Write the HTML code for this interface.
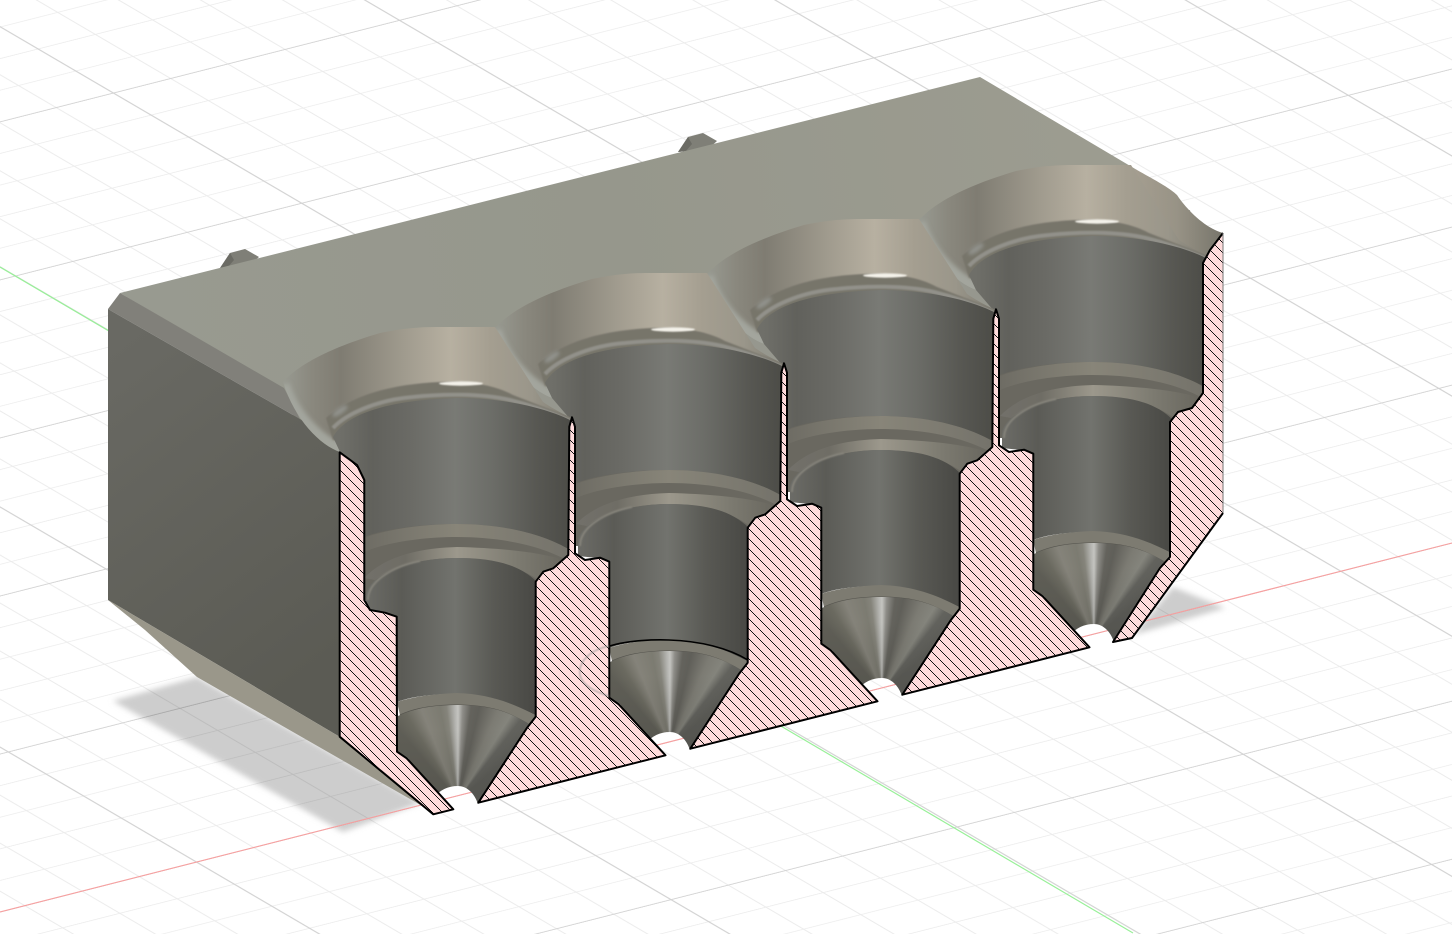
<!DOCTYPE html>
<html><head><meta charset="utf-8"><title>Section view</title>
<style>html,body{margin:0;padding:0;background:#fff;width:1452px;height:934px;overflow:hidden}svg{display:block}
.c{width:140px;height:110px;background:conic-gradient(from 300deg at 63px 100px,#5f5e56 20deg,#6b6a60 29deg,#85837a 38deg,#7c7b71 49deg,#85847b 53deg,#b4b4b0 58deg,#c4c4c0 60deg,#8e8d88 63deg,#64635d 68deg,#605f59 73deg,#7c7b73 84deg,#84847c 92deg,#62625d 98deg,#5c5c57 110deg)}</style>
</head><body>
<svg width="1452" height="934" viewBox="0 0 1452 934" xmlns="http://www.w3.org/2000/svg">
<defs>
<pattern id="grid" patternUnits="userSpaceOnUse" width="100" height="100" patternTransform="matrix(2.861,-0.727,1.883,1.102,721.4,713)">
<g stroke="#ececec" stroke-width="0.48" fill="none">
<path d="M30,0V100M50,0V100M70,0V100M90,0V100"/>
<path d="M0,30H100M0,50H100M0,70H100M0,90H100"/>
</g>
<g stroke="#d2d2d2" stroke-width="0.55" fill="none"><path d="M10,0V100M0,10H100"/></g>
</pattern>
<pattern id="hatch" patternUnits="userSpaceOnUse" width="10" height="10">
<rect width="10" height="10" fill="#ffdcdc"/>
<path fill="#111" shape-rendering="crispEdges" d="M0,0h1v1h-1zM1,1h1v1h-1zM2,2h1v1h-1zM3,3h1v1h-1zM4,4h1v1h-1zM5,5h1v1h-1zM6,6h1v1h-1zM7,7h1v1h-1zM8,8h1v1h-1zM9,9h1v1h-1z"/>
</pattern>
<pattern id="h2" href="#hatch" patternTransform="translate(-212,54)"/>
<pattern id="h3" href="#hatch" patternTransform="translate(-424,108)"/>
<filter id="b4" x="-20%" y="-20%" width="140%" height="140%"><feGaussianBlur stdDeviation="3"/></filter>
<filter id="b2" x="-30%" y="-30%" width="160%" height="160%"><feGaussianBlur stdDeviation="2"/></filter>
<filter id="b15" x="-60%" y="-60%" width="220%" height="220%"><feGaussianBlur stdDeviation="1.8"/></filter>
<filter id="b1" x="-30%" y="-30%" width="160%" height="160%"><feGaussianBlur stdDeviation="0.9"/></filter>
<linearGradient id="top" gradientUnits="userSpaceOnUse" x1="120" y1="300" x2="1100" y2="150">
<stop offset="0" stop-color="#989a90"/><stop offset=".5" stop-color="#96978c"/><stop offset="1" stop-color="#9c9c90"/></linearGradient>
<linearGradient id="left" gradientUnits="userSpaceOnUse" x1="108" y1="350" x2="340" y2="650">
<stop offset="0" stop-color="#696963"/><stop offset="1" stop-color="#5b5b54"/></linearGradient>
<linearGradient id="ext" gradientUnits="userSpaceOnUse" x1="1130" y1="0" x2="1223" y2="0">
<stop offset="0" stop-color="#a69f91"/><stop offset=".5" stop-color="#989386"/><stop offset="1" stop-color="#77756b"/></linearGradient>
<linearGradient id="fl" gradientUnits="userSpaceOnUse" x1="283" y1="0" x2="572" y2="0">
<stop offset="0" stop-color="#989a91"/><stop offset=".1" stop-color="#8a887e"/><stop offset=".2" stop-color="#7f7c72"/><stop offset=".42" stop-color="#a09b8e"/><stop offset=".58" stop-color="#b7b0a1"/><stop offset=".72" stop-color="#a49e90"/><stop offset=".86" stop-color="#9a968a"/><stop offset="1" stop-color="#7e7c72"/></linearGradient>
<linearGradient id="ub" gradientUnits="userSpaceOnUse" x1="340" y1="0" x2="570" y2="0">
<stop offset="0" stop-color="#6f6f69"/><stop offset=".14" stop-color="#61615c"/><stop offset=".3" stop-color="#6a6a65"/><stop offset=".5" stop-color="#797a75"/><stop offset=".66" stop-color="#6c6d68"/><stop offset=".85" stop-color="#585853"/><stop offset="1" stop-color="#4c4c47"/></linearGradient>
<linearGradient id="lb" gradientUnits="userSpaceOnUse" x1="368" y1="0" x2="536" y2="0">
<stop offset="0" stop-color="#6b6b66"/><stop offset=".2" stop-color="#5b5b56"/><stop offset=".52" stop-color="#72736e"/><stop offset=".75" stop-color="#595954"/><stop offset="1" stop-color="#484844"/></linearGradient>
<linearGradient id="gr" gradientUnits="userSpaceOnUse" x1="364" y1="0" x2="570" y2="0">
<stop offset="0" stop-color="#6e6c64"/><stop offset=".45" stop-color="#888579"/><stop offset="1" stop-color="#74726a"/></linearGradient>
<linearGradient id="gr2" gradientUnits="userSpaceOnUse" x1="364" y1="0" x2="570" y2="0">
<stop offset="0" stop-color="#72706a"/><stop offset=".2" stop-color="#6f6d65"/><stop offset=".45" stop-color="#9c988c"/><stop offset=".75" stop-color="#7c7a70"/><stop offset="1" stop-color="#66645c"/></linearGradient>
<linearGradient id="dk" gradientUnits="userSpaceOnUse" x1="0" y1="730" x2="0" y2="795">
<stop offset="0" stop-color="#3c3c38" stop-opacity="0"/><stop offset="1" stop-color="#3c3c38" stop-opacity=".22"/></linearGradient>
<clipPath id="flc"><path d="M283,382C297,367 323,350 380,333C400,329 415,327 437,327L495,327L543,402C555,410 565,415 572,418L572,440L340,452C320,445 295,420 283,382Z"/></clipPath>
<clipPath id="cc"><path d="M398,716C415,708 435,705 457,705C490,705 510,712 531,725L478,804C474,792 466,786 458,786C448,786 440,790 434,797L408,758L398,752Z"/></clipPath>
<g id="hole">
<path d="M283,382C297,367 323,350 380,333C400,329 415,327 437,327L495,327L543,402C555,410 565,415 572,418L572,440L340,452C320,445 295,420 283,382Z" fill="url(#fl)"/>
<g clip-path="url(#flc)">
<path d="M283,385C292,412 315,440 345,452" fill="none" stroke="#a3a59d" stroke-width="13" filter="url(#b2)"/>
<path d="M326,418C345,402 375,385 440,382C470,381 495,385 513,395L572,418L570,436L333,440Z" fill="#77746a" filter="url(#b1)"/>
<path d="M333,428C345,415 375,400 413,397C440,394 480,393 510,400C530,405 550,412 570,421" fill="none" stroke="#92918a" stroke-width="4" filter="url(#b1)"/>
<ellipse cx="340" cy="411" rx="9" ry="3" transform="rotate(-35 340 411)" fill="#92938d" filter="url(#b15)"/>
</g>
<ellipse cx="461" cy="383.5" rx="22" ry="2.2" fill="#f4f2ea" filter="url(#b1)"/>
<path d="M333,437C345,415 385,400 457,398C510,398 550,410 570,420L572,600L364,600L364,480L340,452Z" fill="url(#ub)"/>
<path d="M364,537C385,529 420,524 457,524C505,524 545,535 570,550L570,600L364,600Z" fill="#6a6860"/>
<path d="M364,538C385,530 420,524 457,524C505,524 545,535 570,550L570,562C545,547 505,537 457,537C420,537 385,543 364,552Z" fill="url(#gr)"/>
<path d="M364,578C385,556 420,548 457,547C500,548 540,552 564,560L545,585C520,565 490,558 457,558C425,558 395,565 375,580Z" fill="url(#gr2)"/>
<path d="M366,610L366,595C368,575 410,558 457,558C495,558 520,565 537,582L537,716C515,705 490,694 457,694C430,694 410,697 397,702L397,617L385,612Z" fill="url(#lb)"/>
<path d="M368,600C368,580 395,566 420,561" fill="none" stroke="#85837a" stroke-width="2" filter="url(#b1)"/>
<path d="M397,702C415,696 435,694 457,693C490,694 515,704 537,716L531,726C510,712 490,705 457,705C435,705 415,708 400,715Z" fill="#7d7b71"/>
<path d="M400,715C415,708 435,705 457,705C490,705 510,712 531,726" fill="none" stroke="#55544e" stroke-width="1"/>
</g>
</defs>

<rect width="1452" height="934" fill="#fff"/>
<rect width="1452" height="934" fill="url(#grid)"/>

<!-- floor shadows -->
<g style="mix-blend-mode:multiply">
<path d="M113,701L197,677L420,803L343,832Z" fill="#cdcdcd" filter="url(#b4)"/>
<path d="M1133,635L1173,587L1225,608Z" fill="#cdcdcd" filter="url(#b4)"/>
</g>
<path d="M0,912L1452,543" stroke="#f7a0a0" stroke-width="1.1"/>
<path d="M0,267L1133,933" stroke="#98f098" stroke-width="1.2"/>

<!-- pegs -->
<path d="M220,268L230,253L245,249L259,257L250,265Z" fill="#7f7f77"/><path d="M220,268L230,253L234,260L228,267Z" fill="#6b6b64"/>
<g transform="translate(458,-116)"><path d="M220,268L230,253L245,249L259,257L250,265Z" fill="#7f7f77"/><path d="M220,268L230,253L234,260L228,267Z" fill="#6b6b64"/></g>

<!-- block -->
<path d="M120,293L980,77L1137,170L1120,230L900,300L300,430L280,387Z" fill="url(#top)"/>
<path d="M300,430L1190,210L1200,300L340,520Z" fill="#96978e"/>
<path d="M120,293L108,309L300,419L284,388Z" fill="#81807a"/>
<path d="M108,309L300,419L340,445L340,737L108,600Z" fill="url(#left)"/>
<path d="M108,600L340,737L433,813L417,803L197,677L145,630Z" fill="#9a978a"/>

<!-- right flare extension -->
<path d="M1120,165L1137,170C1155,180 1170,188 1177,195C1187,210 1205,228 1223,233L1210,250L1203,265L1195,258C1170,240 1140,225 1120,220Z" fill="url(#ext)"/>

<!-- holes back to front -->
<use href="#hole" transform="translate(636,-162)"/>
<use href="#hole" transform="translate(424,-108)"/>
<use href="#hole" transform="translate(212,-54)"/>
<use href="#hole"/>

<!-- cone tips -->
<g transform="translate(636,-162)"><g clip-path="url(#cc)"><foreignObject x="395" y="700" width="140" height="110"><div xmlns="http://www.w3.org/1999/xhtml" class="c"></div></foreignObject><rect x="395" y="700" width="140" height="110" fill="url(#dk)"/></g></g>
<g transform="translate(424,-108)"><g clip-path="url(#cc)"><foreignObject x="395" y="700" width="140" height="110"><div xmlns="http://www.w3.org/1999/xhtml" class="c"></div></foreignObject><rect x="395" y="700" width="140" height="110" fill="url(#dk)"/></g></g>
<g transform="translate(212,-54)"><g clip-path="url(#cc)"><foreignObject x="395" y="700" width="140" height="110"><div xmlns="http://www.w3.org/1999/xhtml" class="c"></div></foreignObject><rect x="395" y="700" width="140" height="110" fill="url(#dk)"/></g></g>
<g clip-path="url(#cc)"><foreignObject x="395" y="700" width="140" height="110"><div xmlns="http://www.w3.org/1999/xhtml" class="c"></div></foreignObject><rect x="395" y="700" width="140" height="110" fill="url(#dk)"/></g>

<!-- section faces -->
<g stroke="#000" stroke-width="2" stroke-linejoin="round">
<path fill="url(#hatch)" d="M339.7,452.3L357,465L364.3,480L364.3,600L370,610L385,612.7L396.7,616.7L397,751.7L406.7,758.3L453.3,809.3L433.3,814.3L339.7,736.7Z"/>
<path fill="url(#hatch)" d="M478.3,802.7L526.7,728.3L535.7,716.7L535.7,581.7L543.3,571.7L553.3,568.3L568.3,555L569.3,426.7L572,417.3L575,426.7L575,553.3L585,560L600,557.7L609.3,561.7L609.3,697.7L618.7,704.3L665.5,755.3Z"/>
<path fill="url(#h2)" transform="translate(212,-54)" d="M478.3,802.7L526.7,728.3L535.7,716.7L535.7,581.7L543.3,571.7L553.3,568.3L568.3,555L569.3,426.7L572,417.3L575,426.7L575,553.3L585,560L600,557.7L609.3,561.7L609.3,697.7L618.7,704.3L665.5,755.3Z"/>
<path fill="url(#h3)" transform="translate(424,-108)" d="M478.3,802.7L526.7,728.3L535.7,716.7L535.7,581.7L543.3,571.7L553.3,568.3L568.3,555L569.3,426.7L572,417.3L575,426.7L575,553.3L585,560L600,557.7L609.3,561.7L609.3,697.7L618.7,704.3L665.5,755.3Z"/>
</g>
<path d="M1223,233L1210,250L1203,263L1203,393L1192,408L1178,412L1170,422L1170,557L1160,568L1113,642L1132,638L1223,513Z" fill="url(#hatch)"/>
<path d="M1223,233L1210,250L1203,263L1203,393L1192,408L1178,412L1170,422L1170,557L1160,568L1113,642L1132,638L1223,513" fill="none" stroke="#000" stroke-width="2" stroke-linejoin="round"/>
<path d="M1223,233V513" stroke="#777" stroke-width="1"/>

<!-- faint ring and black arc at second hole -->
<path d="M609,646C590,650 578,662 580,675C582,685 595,692 609,696" fill="none" stroke="#999" stroke-width="1.5" opacity=".7" filter="url(#b1)"/>
<path d="M609.5,646C630,640 655,639.5 669,640C700,641 728,648 748,660" fill="none" stroke="#000" stroke-width="1.6"/>
</svg>
</body></html>
